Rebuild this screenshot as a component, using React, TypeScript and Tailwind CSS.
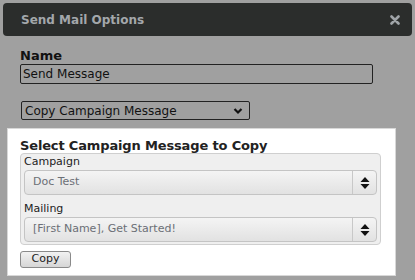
import React from 'react';

const font = { fontFamily: '"DejaVu Sans", Verdana, sans-serif' };

const Spinner: React.FC = () => (
  <svg width="10" height="14" viewBox="0 0 10 14" className="block">
    <path d="M5 1 L9.5 6 L0.5 6 Z" fill="#111" />
    <path d="M0.5 8 L9.5 8 L5 13 Z" fill="#111" />
  </svg>
);

const FancySelect: React.FC<{ value: string }> = ({ value }) => (
  <div className="flex h-[25px] items-stretch rounded-[4px] border border-[#c4c4c4] bg-gradient-to-b from-[#f4f4f4] to-[#e2e2e2]">
    <div className="flex-1 pl-[8px] pt-[3px] text-[11px] leading-[16px] text-[#6b6f76]">{value}</div>
    <div className="flex w-[24px] items-center justify-center border-l border-[#c8c8c8]">
      <Spinner />
    </div>
  </div>
);

export default function App() {
  return (
    <div className="h-[280px] w-[415px] overflow-hidden bg-[#a0a0a0] pt-[3px]" style={font}>
      {/* Titelleiste */}
      <div className="mx-[3px] flex h-[33px] items-center justify-between rounded-[4px] bg-[#2b2d2c] pl-[18px] pr-[12px]">
        <span className="text-[12px] font-bold text-[#a3a7ab]">Send Mail Options</span>
        <svg width="10" height="10" viewBox="0 0 10 10">
          <path d="M1.5 1.5 L8.5 8.5 M8.5 1.5 L1.5 8.5" stroke="#a0a4a8" strokeWidth="2.6" strokeLinecap="round" />
        </svg>
      </div>

      <div className="px-[20px] pt-[12px]">
        <div className="text-[13px] font-bold leading-[16px] text-[#111]">Name</div>
        <div className="flex h-[20px] w-[353px] items-center rounded-[2px] border border-[#222] px-[2px] text-[12px] text-[#111]">
          Send Message
        </div>
        <div className="ml-[1px] mt-[17px] flex h-[19px] w-[229px] items-center justify-between rounded-[2px] border border-[#222] pl-[3px] pr-[6px] text-[12px] text-[#111]">
          <span>Copy Campaign Message</span>
          <svg width="10" height="8" viewBox="0 0 10 8">
            <path d="M1.5 2 L5 5.5 L8.5 2" fill="none" stroke="#111" strokeWidth="2.2" />
          </svg>
        </div>
      </div>

      {/* Weißes Panel */}
      <div className="ml-[7px] mt-[8px] h-[148px] w-[389px] border border-[#d8d8d8] bg-white px-[12px] pt-[9px]">
        <div className="text-[13px] font-bold leading-[15px] tracking-[-0.15px] text-[#222]">
          Select Campaign Message to Copy
        </div>
        <div className="w-[361px] rounded-[4px] border border-[#cfcfcf] bg-[#efefef] px-[3px] pb-[2px]">
          <div className="text-[11px] leading-[16px] text-[#222]">Campaign</div>
          <FancySelect value="Doc Test" />
          <div className="mt-[6px] text-[11px] leading-[16px] text-[#222]">Mailing</div>
          <FancySelect value="[First Name], Get Started!" />
        </div>
        <button className="mt-[2px] h-[17px] w-[51px] rounded-[3px] border border-[#8a8a8a] bg-gradient-to-b from-[#f2f2f2] to-[#d6d6d6] text-[11px] leading-[14px] text-[#222]">
          Copy
        </button>
      </div>
    </div>
  );
}
